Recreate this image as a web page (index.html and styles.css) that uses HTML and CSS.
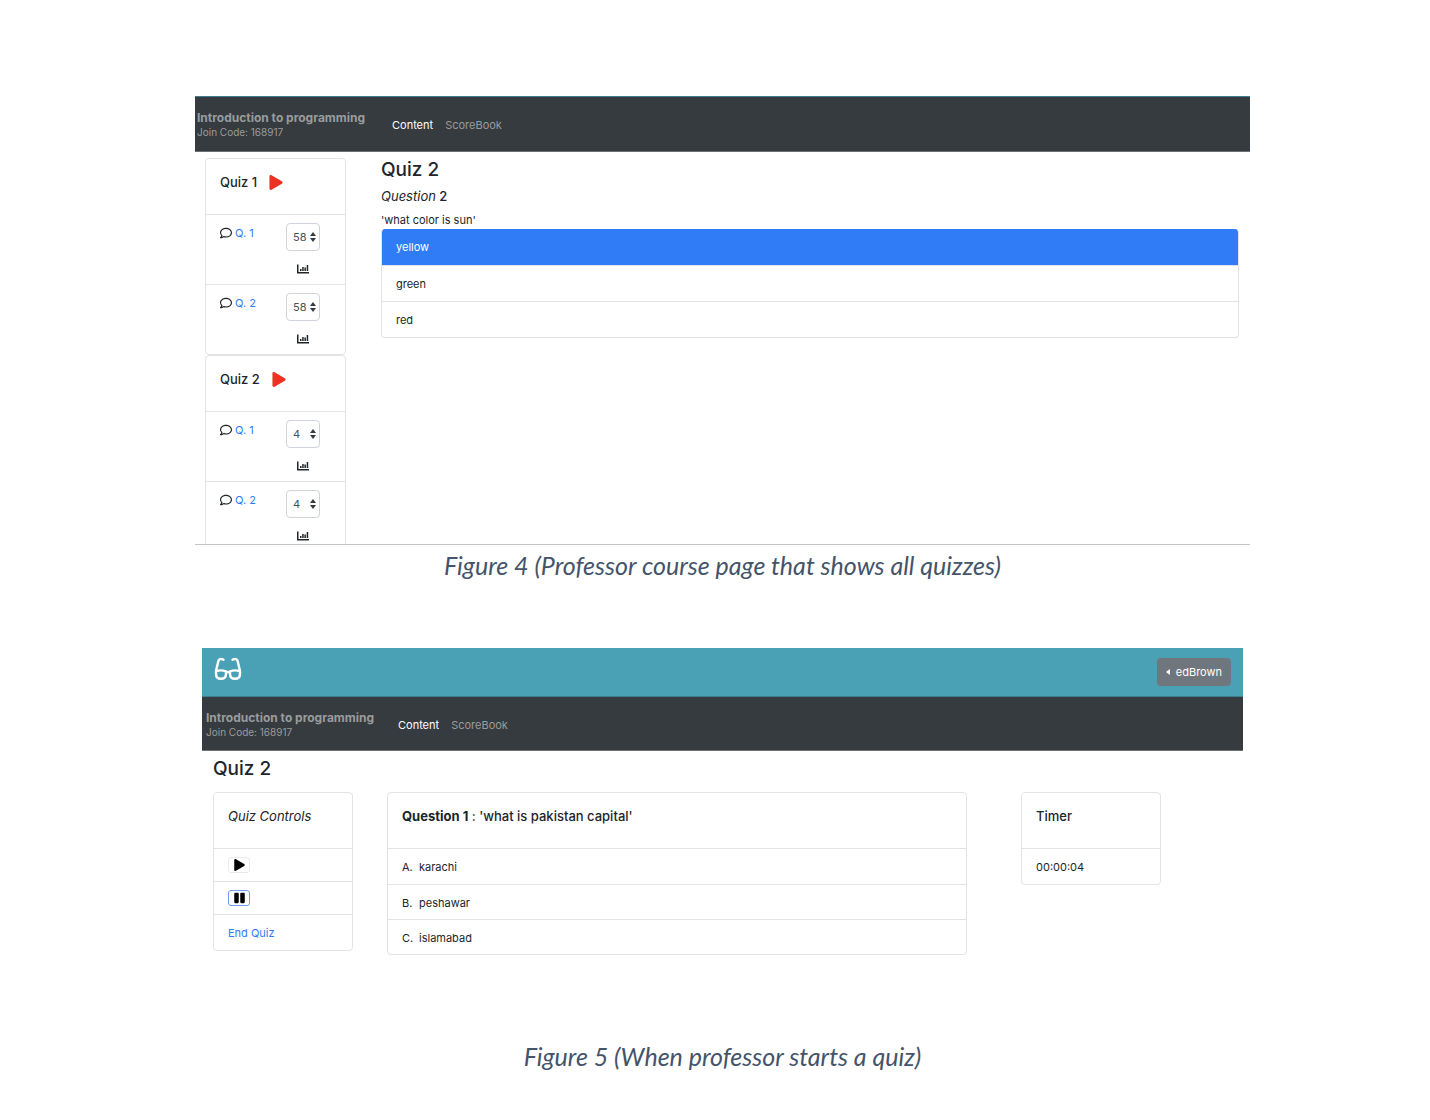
FILE: index.html
```html
<!DOCTYPE html>
<html lang="en">
<head>
<meta charset="utf-8">
<title>Course quizzes</title>
<link rel="stylesheet" href="styles.css">
</head>
<body>
<svg class="sprite" aria-hidden="true">
  <symbol id="play" viewBox="0 0 448 512"><path d="M424.4 214.7L72.4 6.6C43.8-10.3 0 6.1 0 47.9V464c0 37.5 40.7 60.1 72.4 41.3l352-208c31.4-18.5 31.5-64.1 0-82.6z"/></symbol>
  <symbol id="pause" viewBox="0 0 448 512"><path d="M144 479H48c-26.5 0-48-21.5-48-48V79c0-26.5 21.5-48 48-48h96c26.5 0 48 21.5 48 48v352c0 26.5-21.5 48-48 48zm304-48V79c0-26.5-21.5-48-48-48h-96c-26.5 0-48 21.5-48 48v352c0 26.5 21.5 48 48 48h96c26.5 0 48-21.5 48-48z"/></symbol>
  <symbol id="comment" viewBox="0 0 512 512"><path d="M256 32C114.6 32 0 125.1 0 240c0 47.6 19.9 91.2 52.9 126.3C38 405.7 7 439.1 6.500 439.500c-6.600 7-8.400 17.200-4.600 26S14.400 480 24 480c61.500 0 110-25.700 139.100-46.300C192 442.800 223.200 448 256 448c141.400 0 256-93.100 256-208S397.400 32 256 32zm0 368c-26.700 0-53.100-4.100-78.400-12.100l-22.700-7.200-19.500 13.800c-14.300 10.100-33.900 21.400-57.500 29 7.300-12.100 14.400-25.700 19.900-40.200l10.600-28.100-20.600-21.800C69.700 314.100 48 282.200 48 240c0-88.200 93.300-160 208-160s208 71.800 208 160-93.300 160-208 160z"/></symbol>
  <symbol id="chart" viewBox="0 0 12 10"><path d="M0 .5h1.500V8H12v1.500H0zM3 5h1.500v2H3zM5.200 3h1.500v4H5.200zM7.400 3.500h1.500v3.500H7.400zM9.700 1h1.500V7H9.700z"/></symbol>
</svg>
<main class="document">

  <figure>
    <div class="screen screen-course">
      <nav class="navbar">
        <div class="course"><strong>Introduction to programming</strong><small>Join Code: 168917</small></div>
        <a class="active" href="#content">Content</a>
        <a href="#scorebook">ScoreBook</a>
      </nav>
      <div class="course-body">
        <aside>
          <section class="card">
            <h2 class="card-head">Quiz 1 <button class="start" aria-label="Start Quiz 1"><svg><use href="#play"/></svg></button></h2>
            <div class="quiz-row"><a href="#q11"><svg class="comment"><use href="#comment"/></svg>Q. 1</a><div class="tools"><select aria-label="Quiz 1 question 1 time"><option>58</option></select><svg class="chart"><use href="#chart"/></svg></div></div>
            <div class="quiz-row"><a href="#q12"><svg class="comment"><use href="#comment"/></svg>Q. 2</a><div class="tools"><select aria-label="Quiz 1 question 2 time"><option>58</option></select><svg class="chart"><use href="#chart"/></svg></div></div>
          </section>
          <section class="card">
            <h2 class="card-head">Quiz 2 <button class="start" aria-label="Start Quiz 2"><svg><use href="#play"/></svg></button></h2>
            <div class="quiz-row"><a href="#q21"><svg class="comment"><use href="#comment"/></svg>Q. 1</a><div class="tools"><select aria-label="Quiz 2 question 1 time"><option>4</option></select><svg class="chart"><use href="#chart"/></svg></div></div>
            <div class="quiz-row"><a href="#q22"><svg class="comment"><use href="#comment"/></svg>Q. 2</a><div class="tools"><select aria-label="Quiz 2 question 2 time"><option>4</option></select><svg class="chart"><use href="#chart"/></svg></div></div>
          </section>
        </aside>
        <section class="question">
          <h1>Quiz 2</h1>
          <h2><em>Question</em> 2</h2>
          <p>'what color is sun'</p>
          <ul class="answers">
            <li class="correct">yellow</li>
            <li>green</li>
            <li>red</li>
          </ul>
        </section>
      </div>
    </div>
    <figcaption>Figure 4 (Professor course page that shows all quizzes)</figcaption>
  </figure>

  <figure>
    <div class="screen screen-live">
      <header class="topbar">
        <svg class="glasses" viewBox="0 0 28 24" aria-label="Home"><path d="M9.500 2.800 8.300 2.200Q5 1.200 4.300 4.200L2 14M18.500 2.800l1.200-.6Q23 1.200 23.700 4.200L26 14M2 14.500Q7 12.300 12 14.500M16 14.500Q21 12.300 26 14.500M12 15.500q2-1 4 0M2 13.500V17Q2 21.800 7 21.800 12 21.800 12 17V14.500M16 14.500V17Q16 21.800 21 21.800 26 21.800 26 17V13.500"/></svg>
        <button class="user">edBrown</button>
      </header>
      <nav class="navbar">
        <div class="course"><strong>Introduction to programming</strong><small>Join Code: 168917</small></div>
        <a class="active" href="#content">Content</a>
        <a href="#scorebook">ScoreBook</a>
      </nav>
      <div class="live-body">
        <h1>Quiz 2</h1>
        <div class="panels">
          <section class="card">
            <h2 class="card-head"><em>Quiz Controls</em></h2>
            <div class="control-row"><button class="control" aria-label="Play"><svg><use href="#play"/></svg></button></div>
            <div class="control-row"><button class="control focused" aria-label="Pause"><svg><use href="#pause"/></svg></button></div>
            <div class="row"><a href="#end">End Quiz</a></div>
          </section>
          <section class="card current">
            <h2 class="card-head"><strong>Question 1</strong>&nbsp;: 'what is pakistan capital'</h2>
            <div class="row"><span>A.</span>karachi</div>
            <div class="row"><span>B.</span>peshawar</div>
            <div class="row"><span>C.</span>islamabad</div>
          </section>
          <section class="card">
            <h2 class="card-head">Timer</h2>
            <div class="row">00:00:04</div>
          </section>
        </div>
      </div>
    </div>
    <figcaption>Figure 5 (When professor starts a quiz)</figcaption>
  </figure>

</main>
</body>
</html>
```
FILE: styles.css
```css
* { box-sizing: border-box; }
body {
  margin: 0;
  background: #fff;
  color: #212529;
  font: 11px/18px Inter, "Liberation Sans", sans-serif;
}
.sprite { display: none; }
.document { padding: 96px 180px 40px 195px; }
figure, h1, h2, p, ul { margin: 0; }
svg { fill: currentColor; }
a { color: #2f7cf6; text-decoration: none; }
button, select { font: inherit; color: inherit; margin: 0; }
figcaption {
  color: #44546a;
  font: italic 25px/40px Lato, sans-serif;
  text-align: center;
}
h1 { font-size: 19px; line-height: 24px; font-weight: 500; }
h2 { font-size: 13px; line-height: 18px; font-weight: 500; }
em { font-weight: 400; }

.navbar {
  display: flex;
  align-items: center;
  gap: 12px;
  height: 56px;
  padding: 2px 0 0 2px;
  background: #363b3f;
  border-top: 1px solid #3d7f90;
  border-bottom: 1px solid #6d7073;
}
.navbar a { color: #999c9e; }
.navbar a.active { color: #fff; }
.course {
  display: flex;
  flex-direction: column;
  width: 183px;
  color: #999c9e;
  font-size: 12px;
  line-height: 15px;
  white-space: nowrap;
}
.course small { font-size: 10px; }

.card {
  border: 1px solid #e2e3e4;
  border-radius: 4px;
}
.card-head {
  display: flex;
  height: 55px;
  padding: 14px;
}
.row, .control-row, .quiz-row {
  display: flex;
  border-top: 1px solid #e2e3e4;
  padding: 9px 14px;
}

/* Course page */
.screen-course {
  height: 449px;
  overflow: hidden;
  border-bottom: 1px solid #c4c5c6;
}
.course-body {
  display: grid;
  grid-template-columns: 141px 1fr;
  gap: 35px;
  padding: 6px 11px 0 10px;
}
.start {
  display: flex;
  margin-left: 12px;
  padding: 2px 0;
  border: 0;
  background: none;
  color: #eb3323;
}
.start svg { width: 14px; height: 15px; }
.quiz-row {
  justify-content: space-between;
  height: 70px;
  padding: 8px 25px 0 14px;
}
.quiz-row a { display: flex; gap: 3px; height: 20px; align-items: center; }
.comment { width: 12px; height: 12px; color: #212529; }
.tools { display: flex; flex-direction: column; align-items: center; gap: 13px; }
select {
  appearance: none;
  width: 34px;
  height: 28px;
  padding: 0 6px;
  border: 1px solid #ced4da;
  border-radius: 4px;
  color: #495057;
  background: url("data:image/svg+xml,%3Csvg xmlns='http://www.w3.org/2000/svg' viewBox='0 0 6 10'%3E%3Cpath fill='%23343a40' d='M3 0 6 4H0zM3 10 0 6h6z'/%3E%3C/svg%3E") no-repeat right 3px center / 6px 10px;
}
.chart { width: 12px; height: 10px; }
.question h2 { margin-top: 5px; }
.question p { margin-top: 6px; }
.answers {
  padding: 0;
  list-style: none;
  border: 1px solid #e2e3e4;
  border-top: 0;
  border-radius: 4px;
  overflow: hidden;
}
.answers li { height: 36px; padding: 9px 14px; }
.answers li + li { border-top: 1px solid #e2e3e4; }
.answers .correct { background: #2f7cf6; color: #fff; }

/* Running quiz */
.screen-live { margin: 63px 7px 0; }
.topbar {
  display: flex;
  align-items: center;
  justify-content: space-between;
  height: 48px;
  padding: 0 12px;
  background: #4aa0b5;
}
.glasses {
  width: 28px;
  height: 24px;
  margin-bottom: 6px;
  fill: none;
  stroke: #fff;
  stroke-width: 2.4;
  stroke-linecap: round;
  stroke-linejoin: round;
}
.user {
  display: flex;
  align-items: center;
  gap: 6px;
  height: 28px;
  padding: 0 9px;
  border: 0;
  border-radius: 4px;
  background: #70767d;
  color: #fff;
}
.user::before {
  content: "";
  border: solid transparent;
  border-width: 3px 4px 3px 0;
  border-right-color: #fff;
}
.screen-live .navbar { height: 55px; padding-left: 4px; }
.screen-live .course { width: 180px; }
.live-body { padding: 6px 82px 0 11px; }
.panels {
  display: grid;
  grid-template-columns: 140fr 600fr 140fr;
  align-items: start;
  gap: 34px;
  margin-top: 11px;
}
.current { margin-right: 20px; }
.current span { width: 17px; }
.row { height: 36px; }
.row + .row { height: 35px; }
.control-row { height: 33px; padding: 8px 14px; }
.control {
  display: flex;
  align-items: center;
  justify-content: center;
  width: 22px;
  height: 16px;
  padding: 0;
  border: 1px solid #e9eaeb;
  border-radius: 3px;
  background: #fff;
  color: #000;
}
.control svg { width: 11px; height: 12px; }
.control.focused { border-color: #6f9df0; }
.screen-live + figcaption { margin-top: 81px; }
```
